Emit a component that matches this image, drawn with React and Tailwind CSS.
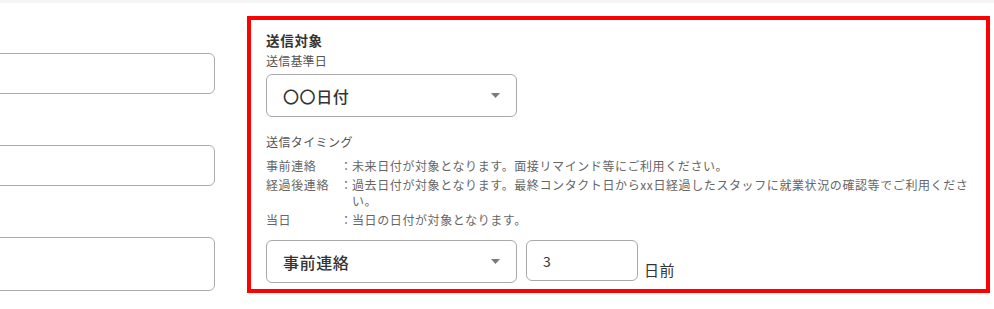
const font = { fontFamily: '"Noto Sans CJK JP", "Noto Sans", sans-serif' };

function Caret() {
  return (
    <svg width="9" height="5" viewBox="0 0 9 5" className="shrink-0">
      <path d="M0 0 L9 0 L4.5 5 Z" fill="#7a7a7a" />
    </svg>
  );
}

function Select({ value }) {
  return (
    <div className="flex items-center justify-between w-[251px] h-[43px] px-[16px] border border-[#a9a9a9] rounded-[6px] bg-white">
      <span className="text-[16px] font-medium tracking-[0.6px] text-[#333]">{value}</span>
      <Caret />
    </div>
  );
}

const timings = [
  { label: '事前連絡', text: '未来日付が対象となります。面接リマインド等にご利用ください。' },
  { label: '経過後連絡', text: '過去日付が対象となります。最終コンタクト日からxx日経過したスタッフに就業状況の確認等でご利用ください。' },
  { label: '当日', text: '当日の日付が対象となります。' },
];

export default function App() {
  return (
    <div className="w-[994px] h-[309px] overflow-hidden bg-white" style={font}>
      <div className="h-[3px] bg-[#f5f5f5]" />
      <div className="flex">
        {/* left column, cut off at the page edge */}
        <div className="w-[215px] shrink-0 overflow-hidden">
          <div className="-ml-[20px] w-[235px]">
            <div className="mt-[50px] h-[41px] border border-[#ababab] rounded-[6px]" />
            <div className="mt-[51px] h-[41px] border border-[#ababab] rounded-[6px]" />
            <div className="mt-[51px] h-[54px] border border-[#ababab] rounded-[6px]" />
          </div>
        </div>

        {/* highlighted section */}
        <div className="ml-[32px] mt-[13px] w-[743px] h-[277px] border-[4px] border-[#ff0000] pl-[15px] pr-[12px] pt-[11px]">
          <p className="text-[13.5px] font-bold leading-[18px] tracking-[0.7px] text-[#333]">送信対象</p>
          <p className="mt-[4px] text-[12px] leading-[16px] tracking-[0.2px] text-[#555]">送信基準日</p>
          <div className="mt-[5px]">
            <Select value="〇〇日付" />
          </div>

          <p className="mt-[17px] text-[12px] leading-[16px] tracking-[0.4px] text-[#555]">送信タイミング</p>
          <div className="mt-[8px] flex flex-col gap-[3px]">
            {timings.map((t) => (
              <div key={t.label} className="flex text-[12px] leading-[16px] tracking-[0.6px] text-[#666]">
                <span className="w-[74px] shrink-0">{t.label}</span>
                <span className="w-[12px] shrink-0">：</span>
                <span className="flex-1">{t.text}</span>
              </div>
            ))}
          </div>

          <div className="mt-[12px] flex items-start gap-[9px]">
            <Select value="事前連絡" />
            <div className="flex items-start gap-[6px]">
              <div className="w-[112px] h-[41px] border border-[#a9a9a9] rounded-[6px] pl-[16px] pt-[10px] text-[14px] leading-[20px] text-[#333]">
                3
              </div>
              <span className="mt-[20px] text-[15px] leading-[20px] tracking-[0.5px] text-[#333]">日前</span>
            </div>
          </div>
        </div>
      </div>
    </div>
  );
}
